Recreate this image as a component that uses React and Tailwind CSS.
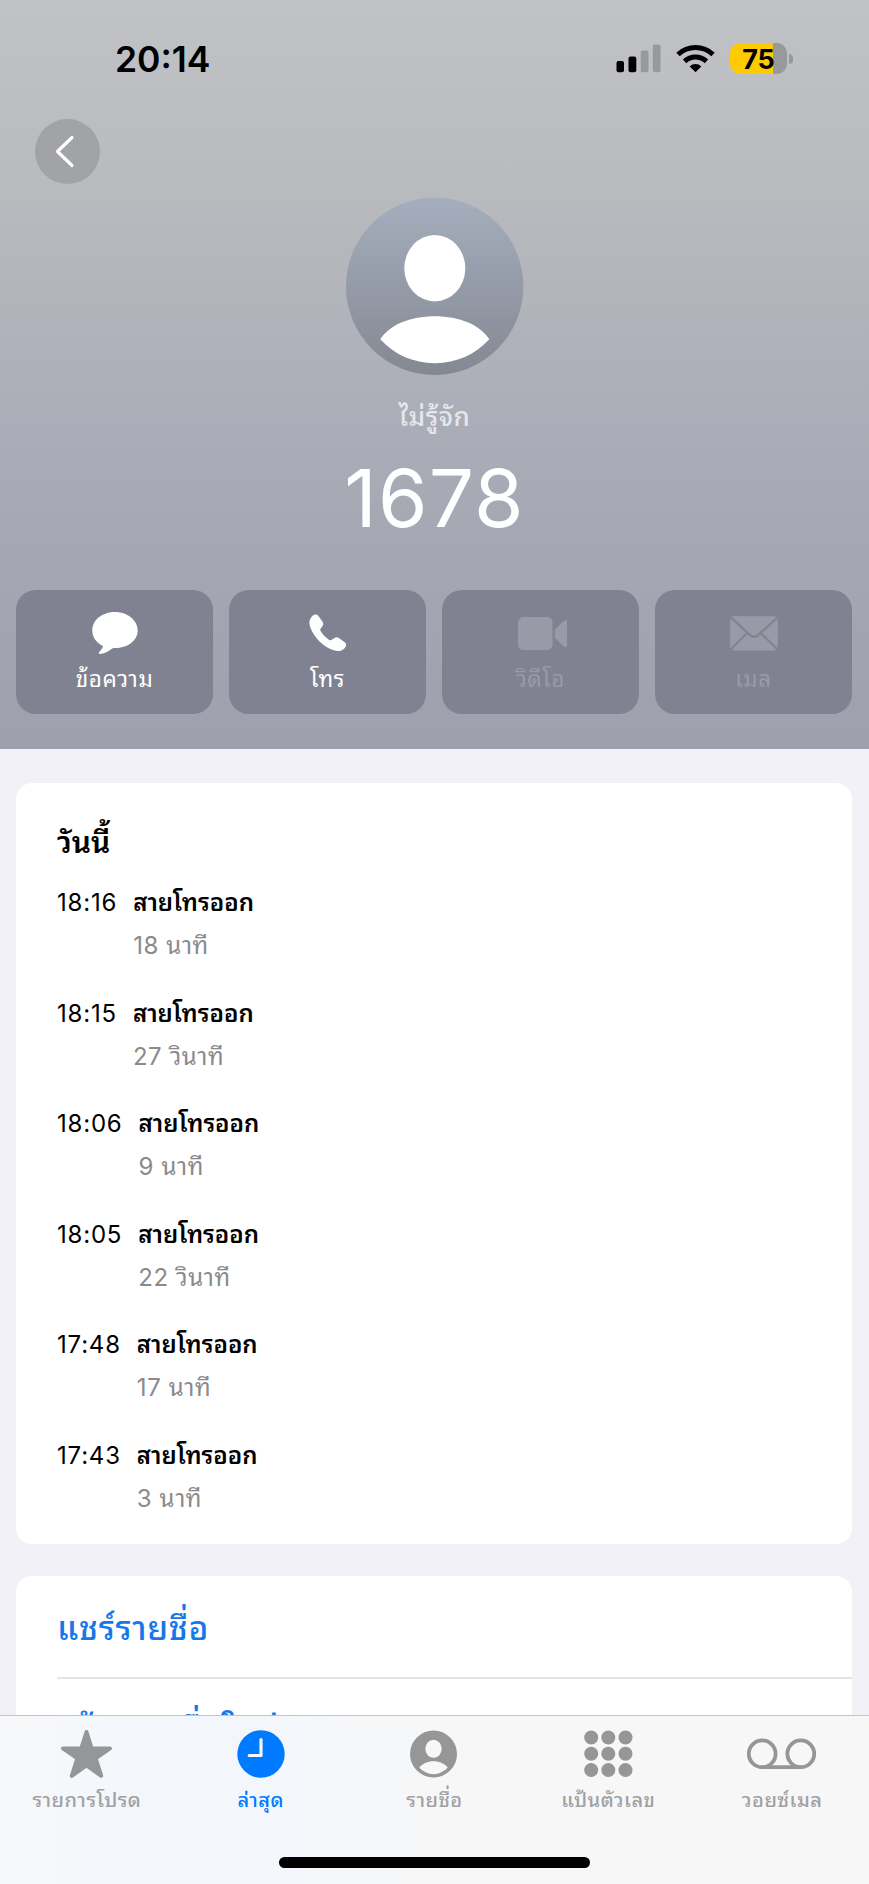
import React from 'react';

const calls = [
  { time: '18:16', duration: '18 นาที' },
  { time: '18:15', duration: '27 วินาที' },
  { time: '18:06', duration: '9 นาที' },
  { time: '18:05', duration: '22 วินาที' },
  { time: '17:48', duration: '17 นาที' },
  { time: '17:43', duration: '3 นาที' }
];

const MessageIcon = () => (
  <svg width="46" height="43" viewBox="0 0 46 43" fill="currentColor">
    <path d="M23 0C10.300 0 .3 8 .3 18.500c0 6.600 4 12.200 10.200 15.300.5.300.5.800.2 1.400-.8 1.700-2.200 3.400-3.500 4.900-.9 1-.3 2 1 1.900 5-.4 8.700-2.800 11.600-5.200.8-.6 1.400-.7 2.200-.7h1c12.700 0 22.700-7.500 22.700-17.600S35.700 0 23 0z" />
  </svg>
);

const PhoneIcon = () => (
  <svg width="38" height="38" viewBox="0 0 38 38" fill="currentColor">
    <path d="M3.600 1.800C5.300.2 7.900.1 9.500 2l4 5.700c1 1.500 1 3-.1 4.500l-1.700 2.400c-.6.900-.6 1.600-.1 2.500 2 3.500 5.200 6.700 8.700 8.800.9.500 1.600.5 2.500-.1l2.400-1.600c1.500-1.100 3.100-1.100 4.600-.1l5.900 4.100c1.900 1.400 1.800 4 .2 5.700-2.500 2.800-5.800 3.800-10.200 2.700C15.500 34.100 4.400 23.500 1 12.500-.4 8 .8 4.300 3.600 1.800z" />
  </svg>
);

const VideoIcon = () => (
  <svg className="ml-[3px]" width="49" height="33" viewBox="0 0 49 33" fill="currentColor">
    <rect x="0" y="0" width="34.500" height="33" rx="5.500" />
    <path d="M36.900 12.400 45.300 4.300c1.800-1.700 3.700-1.300 3.700.8v23c0 2.100-1.900 2.500-3.700.8l-8.400-8.100z" />
  </svg>
);

const MailIcon = () => (
  <svg width="48" height="35" viewBox="0 0 48 35" fill="currentColor">
    <path d="M3 .3h42c.8 0 1.300.2 1.700.5L27.500 18c-2.500 2.200-4.500 2.200-7 0L1.700.8C2 .5 2.400.3 3 .3z" />
    <path d="M.2 2.600 16 16.900.2 32.200zM47.800 2.600v29.600L32 16.900zM17.500 18.300l1.800 1.600c3.300 2.800 6.100 2.800 9.400 0l1.800-1.600 15.800 15.400c-.4.500-.8.700-1.500.7H3.200c-.7 0-1.100-.2-1.500-.7z" />
  </svg>
);

const StarIcon = () => (
  <svg width="51" height="50" viewBox="0 0 51 50" fill="currentColor" stroke="currentColor" strokeWidth="4" strokeLinejoin="round">
    <path d="m25.500 3 5.200 16.400H49L34.700 29.300 40.200 46.800 25.500 36.300 10.800 46.800l5.500-17.500L2 19.400h18.300z" />
  </svg>
);

const ClockIcon = () => (
  <svg width="48" height="48" viewBox="0 0 48 48">
    <circle cx="24" cy="24" r="23.700" fill="currentColor" />
    <path d="M24 9.500v16H12.200" fill="none" stroke="#f4f8fd" strokeWidth="3.200" strokeLinecap="round" strokeLinejoin="round" />
  </svg>
);

const ContactIcon = () => (
  <svg width="48" height="48" viewBox="0 0 48 48">
    <circle cx="23.500" cy="24" r="23.500" fill="currentColor" />
    <ellipse cx="23.500" cy="18.800" rx="8.200" ry="9" fill="#f7f7f8" />
    <path d="M9.300 37.600C12 33.800 17.500 31.300 23.500 31.300s11.500 2.500 14.200 6.300c-3.600 4-8.600 6.600-14.200 6.600s-10.600-2.600-14.200-6.600z" fill="#f7f7f8" />
  </svg>
);

const KeypadIcon = () => (
  <svg width="49" height="48" viewBox="0 0 49 48" fill="currentColor">
    {[7.200, 24.300, 41.500].map((x) =>
      [7.500, 23.800, 40.100].map((y) => <circle key={`${x}-${y}`} cx={x} cy={y} r="7" />)
    )}
  </svg>
);

const VoicemailIcon = () => (
  <svg width="70" height="48" viewBox="0 0 70 48" fill="none" stroke="currentColor" strokeWidth="3.800">
    <circle cx="15.200" cy="23.800" r="13.400" />
    <circle cx="53.800" cy="23.800" r="13.400" />
    <path d="M15.200 37.200h38.600" />
  </svg>
);

const actions = [
  { icon: MessageIcon, label: 'ข้อความ', enabled: true },
  { icon: PhoneIcon, label: 'โทร', enabled: true },
  { icon: VideoIcon, label: 'วิดีโอ', enabled: false },
  { icon: MailIcon, label: 'เมล', enabled: false }
];

const tabs = [
  { icon: StarIcon, label: 'รายการโปรด' },
  { icon: ClockIcon, label: 'ล่าสุด', active: true },
  { icon: ContactIcon, label: 'รายชื่อ' },
  { icon: KeypadIcon, label: 'แป้นตัวเลข' },
  { icon: VoicemailIcon, label: 'วอยซ์เมล' }
];

const StatusBar = () => (
  <div className="flex h-[119px] items-start justify-between pl-[115px] pr-[76px]">
    <div className="mt-[38px] text-[35.500px] font-semibold leading-[43px] text-black">20:14</div>
    <div className="mt-[43px] flex items-start">
      <svg width="45" height="31" viewBox="0 0 45 31">
        <rect x="0.500" y="18" width="7.500" height="11.300" rx="2" fill="#000" />
        <rect x="12.500" y="13.500" width="7.800" height="15.800" rx="2" fill="#000" />
        <rect x="24.700" y="7.500" width="7.800" height="21.800" rx="2" fill="#98999c" />
        <rect x="36.800" y="1.500" width="7.800" height="27.800" rx="2" fill="#98999c" />
      </svg>
      <svg className="ml-[15px]" width="40" height="31" viewBox="0 0 40 31" fill="none" stroke="#000" strokeWidth="5">
        <path d="M2 11.500a25.500 25.500 0 0 1 35 0" />
        <path d="M8.600 18.300a16 16 0 0 1 21.800 0" />
        <path d="M19.500 29.300l-5.800-5.900a8.500 8.500 0 0 1 11.600 0z" fill="#000" stroke="none" />
      </svg>
      <div className="ml-[14px] flex h-[31px] w-[57px] items-center justify-center rounded-[10px] bg-[linear-gradient(to_right,#fecb03_75%,#98999c_75%)]">
        <span className="pt-px text-[27px] font-bold leading-[31px] text-black">75</span>
      </div>
      <div className="ml-[2px] mt-[11px] h-[10px] w-[4px] rounded-r-full bg-[#98999c]" />
    </div>
  </div>
);

const ContactHeader = () => (
  <header className="flex h-[749px] flex-col bg-[linear-gradient(to_bottom,#c1c2c6_0%,#b9babe_26%,#adb0b9_50%,#a5a7b3_72%,#9fa0ad_100%)]">
    <StatusBar />
    <button className="ml-[34.500px] flex size-[65px] shrink-0 items-center justify-center rounded-full bg-[#a2a3a6]">
      <svg className="mr-1" width="20" height="34" viewBox="0 0 20 34" fill="none" stroke="#fff" strokeWidth="3.200" strokeLinecap="round" strokeLinejoin="round">
        <path d="M17 2.500 2.500 16.500 17 30.500" />
      </svg>
    </button>
    <div className="mt-[13px] flex flex-col items-center">
      <svg width="178" height="178" viewBox="0 0 178 178">
        <defs>
          <linearGradient id="avatar" x1="0" y1="0" x2="0" y2="1">
            <stop offset="0" stopColor="#a5aebd" />
            <stop offset="1" stopColor="#848892" />
          </linearGradient>
        </defs>
        <circle cx="88.700" cy="89.300" r="88.700" fill="url(#avatar)" />
        <ellipse cx="88.800" cy="71.200" rx="30.500" ry="33.200" fill="#fff" />
        <path d="M34.300 142.300C44 127.800 64 119.300 88.800 119.300s45 8.500 54.500 23c-13.500 15-33 24-54.500 24s-41-9-54.500-24z" fill="#fff" />
      </svg>
      <div className="mt-[22px] h-[40px] text-[26px] font-medium leading-[40px] tracking-[0.5px] text-[#e6e7ec]">ไม่รู้จัก</div>
      <h1 className="mt-[13px] h-[96px] text-[80px] leading-[96px] tracking-[1.200px] text-white">1678</h1>
    </div>
    <div className="ml-4 mr-[17px] mt-[44px] grid grid-cols-4 gap-4">
      {actions.map(({ icon: Icon, label, enabled }) => (
        <button
          key={label}
          className={`flex h-[124px] flex-col items-center rounded-[20px] bg-[#808292] pt-[20px] ${enabled ? 'text-white' : 'text-[#989aa8]'}`}
        >
          <span className="flex h-[46px] items-center">
            <Icon />
          </span>
          <span className="mt-[5px] text-[22.500px] leading-[36px] tracking-[0.6px]">{label}</span>
        </button>
      ))}
    </div>
  </header>
);

const CallHistory = () => (
  <section className="ml-4 mr-[17px] mt-[34px] h-[761px] rounded-[16px] bg-white pl-[41px] pt-[35px]">
    <h2 className="h-[48px] text-[30px] font-semibold leading-[48px]">วันนี้</h2>
    <ul className="mt-[17px]">
      {calls.map(({ time, duration }) => (
        <li key={time} className="flex h-[110.600px] gap-[16px]">
          <span className="text-[24px] leading-[40px] tracking-[0.8px]">{time}</span>
          <div>
            <p className="text-[24px] font-semibold leading-[40px]">สายโทรออก</p>
            <p className="mt-[3px] text-[24px] leading-[40px] tracking-[0.6px] text-[#8a8a8e]">{duration}</p>
          </div>
        </li>
      ))}
    </ul>
  </section>
);

const TabBar = () => (
  <nav className="flex h-[169px] shrink-0 flex-col border-t border-[#c4c4c8] bg-[linear-gradient(to_right,#f7f8f9_0%,#f3f7fc_15%,#f3f7fc_30%,#f7f7f8_48%)]">
    <div className="grid grid-cols-5">
      {tabs.map(({ icon: Icon, label, active }) => (
        <a key={label} className={`flex flex-col items-center pt-[11px] ${active ? 'text-[#007aff]' : 'text-[#959698]'}`}>
          <span className="flex h-[54px] items-center">
            <Icon />
          </span>
          <span className={`mt-[3px] text-[20px] font-medium leading-[32px] tracking-[0.5px] ${active ? '' : 'text-[#a0a1a3]'}`}>{label}</span>
        </a>
      ))}
    </div>
    <div className="mx-auto mt-[41px] h-[11px] w-[311px] rounded-full bg-black" />
  </nav>
);

const App = () => (
  <div className="flex h-[1884px] w-[869px] flex-col overflow-hidden bg-[#f2f1f7] font-['Inter','Thonburi','Noto_Sans_Thai_Looped','Noto_Looped_Thai','Loma','Waree','Garuda','Umpush','Sarabun','Norasi','Kinnari','Noto_Sans_Thai',sans-serif] text-black">
    <div className="h-[1715px] overflow-hidden">
      <ContactHeader />
      <CallHistory />
      <section className="ml-4 mr-[17px] mt-[32px] h-[210px] rounded-t-[16px] bg-white pl-[41px] text-[33.500px] font-medium leading-[48px] text-[#1677e8]">
        <div className="h-[102.500px] border-b-2 border-[#e5e5e8] pt-[28px] tracking-[0.7px]">แชร์รายชื่อ</div>
        <div className="pt-[26px] tracking-[0.7px]">สร้างรายชื่อใหม่</div>
      </section>
    </div>
    <TabBar />
  </div>
);

export default App;
